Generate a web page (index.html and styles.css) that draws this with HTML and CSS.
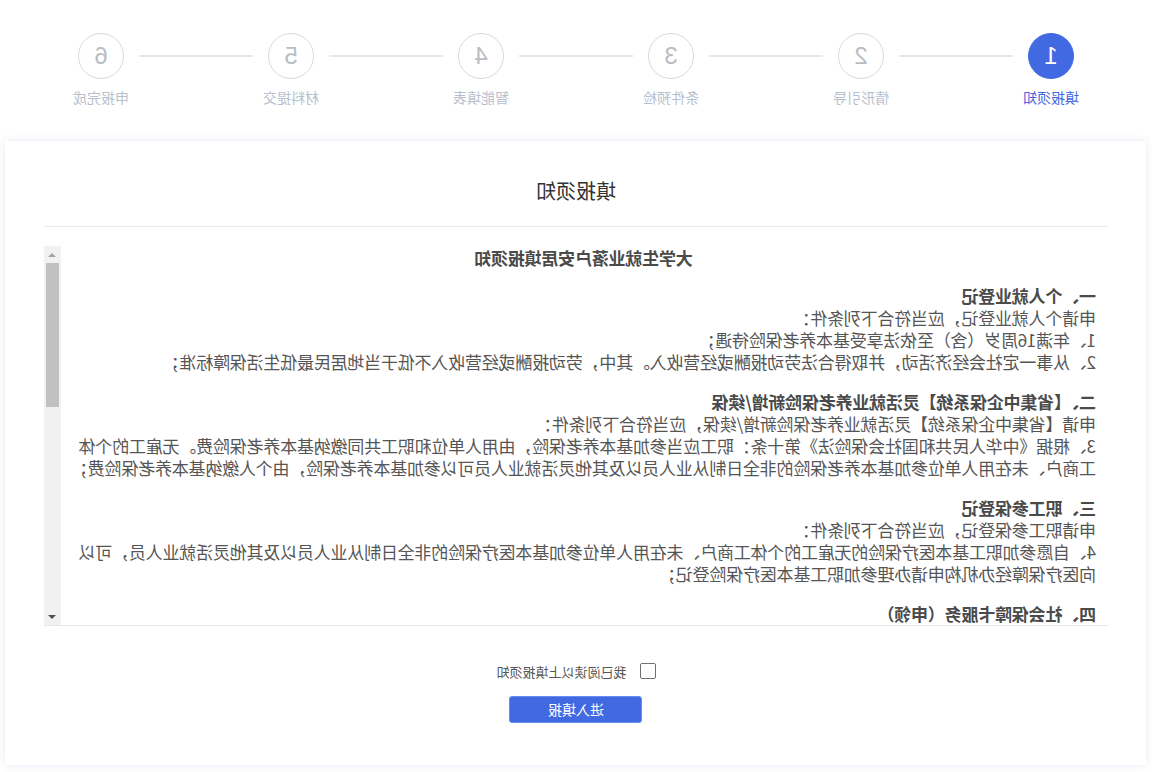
FILE: index.html
```html
<!DOCTYPE html>
<html lang="zh-CN">
<head>
	<meta charset="UTF-8">
	<title>填报须知</title>
	<link rel="stylesheet" href="styles.css">
</head>
<body>
<div class="page">
	<div class="steps">
		<div class="step active"><div class="step_num">1</div><div class="step_label">填报须知</div></div>
		<div class="step_line"></div>
		<div class="step"><div class="step_num">2</div><div class="step_label">情形引导</div></div>
		<div class="step_line"></div>
		<div class="step"><div class="step_num">3</div><div class="step_label">条件预检</div></div>
		<div class="step_line"></div>
		<div class="step"><div class="step_num">4</div><div class="step_label">智能填表</div></div>
		<div class="step_line"></div>
		<div class="step"><div class="step_num">5</div><div class="step_label">材料提交</div></div>
		<div class="step_line"></div>
		<div class="step"><div class="step_num">6</div><div class="step_label">申报完成</div></div>
	</div>

	<div class="card">
		<div class="card_head">填报须知</div>
		<div class="notice">
			<div class="notice_body">
				<div class="notice_title">大学生就业落户安居填报须知</div>
				<div class="sec">
					<div class="sec_head">一、个人就业登记</div>
					<p>申请个人就业登记，应当符合下列条件：</p>
					<p>1、年满16周岁（含）至依法享受基本养老保险待遇；</p>
					<p>2、从事一定社会经济活动，并取得合法劳动报酬或经营收入。其中，劳动报酬或经营收入不低于当地居民最低生活保障标准；</p>
				</div>
				<div class="sec">
					<div class="sec_head">二、【省集中企保系统】灵活就业养老保险新增/续保</div>
					<p>申请【省集中企保系统】灵活就业养老保险新增/续保，应当符合下列条件：</p>
					<p>3、根据《中华人民共和国社会保险法》第十条：职工应当参加基本养老保险，由用人单位和职工共同缴纳基本养老保险费。无雇工的个体工商户、未在用人单位参加基本养老保险的非全日制从业人员以及其他灵活就业人员可以参加基本养老保险，由个人缴纳基本养老保险费；</p>
				</div>
				<div class="sec">
					<div class="sec_head">三、职工参保登记</div>
					<p>申请职工参保登记，应当符合下列条件：</p>
					<p>4、自愿参加职工基本医疗保险的无雇工的个体工商户、未在用人单位参加基本医疗保险的非全日制从业人员以及其他灵活就业人员，可以向医疗保障经办机构申请办理参加职工基本医疗保险登记；</p>
				</div>
				<div class="sec">
					<div class="sec_head">四、社会保障卡服务（申领）</div>
					<p>申请社会保障卡，应当符合下列条件：</p>
					<p>5、已在本市参加社会保险并登记个人基本信息，尚未申领社会保障卡或原社会保障卡已注销；</p>
				</div>
			</div>
			<div class="scrollbar">
				<div class="sb_btn sb_up"></div>
				<div class="sb_track"><div class="sb_thumb"></div></div>
				<div class="sb_btn sb_down"></div>
			</div>
		</div>
		<label class="agree"><span class="agree_box"></span>我已阅读以上填报须知</label>
		<button class="btn_enter">进入填报</button>
	</div>
</div>
</body>
</html>
```

FILE: styles.css
```css
*{box-sizing:border-box;}
html,body{margin:0;background:#fff;}
body{font-family:"Noto Sans CJK SC","Noto Sans",sans-serif;color:#555;}
.page{width:1152px;height:772px;overflow:hidden;transform:scaleX(-1);}

.steps{display:flex;justify-content:center;align-items:flex-start;padding-top:33px;}
.step{width:46px;display:flex;flex-direction:column;align-items:center;}
.step_num{width:46px;height:46px;border-radius:50%;border:1px solid #d6d9df;color:#b9bcc2;font-family:"Liberation Sans",sans-serif;font-size:24px;line-height:44px;text-align:center;}
.step_label{margin-top:8px;font-size:14px;line-height:20px;white-space:nowrap;color:#b7bfcd;}
.step.active .step_num{background:#4169e1;border-color:#4169e1;color:#fff;}
.step.active .step_label{color:#3f66dc;}
.step_line{width:114px;height:2px;margin:22px 15px 0;background:#e5e7eb;}

.card{margin:34px 5px 0 6px;padding:0 39px 42px 38px;background:#fff;box-shadow:0 0 8px rgba(70,90,170,0.13);}
.card_head{padding:36px 0 21px;font-size:20px;line-height:28px;color:#333;text-align:center;border-bottom:1px solid #e8e8e8;}

.notice{display:flex;margin-top:19px;height:380px;border-bottom:1px solid #e6e6e6;}
.notice_body{flex:1;overflow:hidden;padding:1px 10px 0 12px;font-size:17px;line-height:22px;letter-spacing:-0.2px;color:#555;}
.notice_title{text-align:center;font-weight:bold;color:#4a4a4a;}
.sec{margin-top:16px;}
.sec + .sec{margin-top:18px;}
.sec_head{font-weight:bold;color:#4a4a4a;}
.notice p{margin:0;}

.scrollbar{width:17px;display:flex;flex-direction:column;background:#f1f1f1;}
.sb_btn{height:17px;display:flex;align-items:center;justify-content:center;}
.sb_up::before{content:"";border:4px solid transparent;border-top:0;border-bottom:4px solid #a3a3a3;}
.sb_down::before{content:"";border:4px solid transparent;border-bottom:0;border-top:4px solid #505050;}
.sb_track{flex:1;}
.sb_thumb{height:144px;margin:0 2px;background:#c1c1c1;}

.agree{display:flex;justify-content:center;align-items:center;gap:13px;margin-top:37px;height:16px;font-size:13px;color:#555;}
.agree_box{width:16px;height:16px;border:1px solid #707070;border-radius:2px;background:#fff;}
.btn_enter{display:block;margin:17px auto 0;width:133px;height:27px;padding:0;border:1px solid #6a8cf0;border-radius:3px;background:#4169e1;color:#fff;font-family:"Noto Sans CJK SC",sans-serif;font-size:14px;line-height:25px;}
```
